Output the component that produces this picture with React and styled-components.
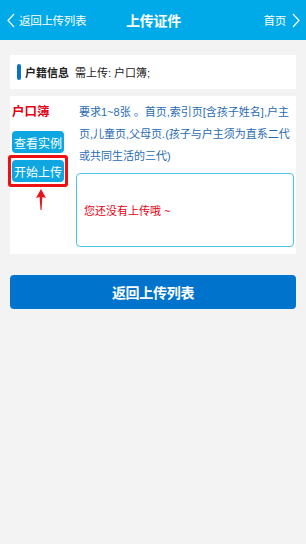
import React from "react";
import styled, { createGlobalStyle } from "styled-components";

const Global = createGlobalStyle`
  html, body { margin: 0; padding: 0; background: #f3f3f4; }
  body { font-family: "Liberation Sans", "Noto Sans CJK SC", sans-serif; width: 306px; height: 544px; }
  * { box-sizing: border-box; }
`;

const Header = styled.div`
  height: 40px;
  background: #00a9e7;
  color: #fff;
  display: grid;
  grid-template-columns: 1fr auto 1fr;
  align-items: center;
  padding: 0 6px 0 7px;
`;

const NavLink = styled.div`
  display: flex;
  align-items: center;
  justify-content: ${(p) => (p.$right ? "flex-end" : "flex-start")};
  gap: ${(p) => (p.$right ? "6px" : "4px")};
  font-size: 11.5px;
  letter-spacing: -0.3px;
`;

const Title = styled.div`
  font-size: 14px;
  font-weight: bold;
  letter-spacing: -0.3px;
`;

const Card = styled.div`
  margin: 0 10px;
  background: #fff;
`;

const InfoCard = styled(Card)`
  margin-top: 15px;
  height: 34px;
  display: flex;
  align-items: center;
  padding-left: 7px;
  font-size: 11px;
  color: #222;
`;

const Bar = styled.span`
  width: 4px;
  height: 16px;
  border-radius: 2px;
  background: #0a73c8;
  margin-right: 4px;
`;

const InfoLabel = styled.span`
  font-weight: bold;
  margin-right: 6px;
`;

const DocCard = styled(Card)`
  margin-top: 7px;
  display: flex;
  padding: 5px 2px 7px 0;
`;

const LeftCol = styled.div`
  width: 66px;
  padding-left: 2px;
  display: flex;
  flex-direction: column;
  align-items: flex-start;
`;

const DocName = styled.div`
  color: #e60012;
  font-weight: bold;
  font-size: 12.5px;
  line-height: 22px;
`;

const Btn = styled.div`
  width: 52px;
  height: 22px;
  border-radius: 4px;
  background: #0ea7e1;
  color: #fff;
  font-size: 12px;
  display: flex;
  align-items: center;
  justify-content: center;
`;

const FirstBtn = styled(Btn)`
  margin-top: 8px;
`;

const Highlight = styled.div`
  margin: 2px 0 0 -4px;
  padding: 2px 1px;
  border: 3px solid #ee1111;
  border-radius: 3px;
`;

const Arrow = styled.svg`
  display: block;
  margin: 2px 0 0 24px;
`;

const RightCol = styled.div`
  flex: 1;
  display: flex;
  flex-direction: column;
`;

const Req = styled.div`
  padding-left: 3px;
  color: #1f6bb3;
  font-size: 11px;
  line-height: 22px;
  white-space: nowrap;
`;

const UploadBox = styled.div`
  margin-top: 6px;
  height: 74px;
  border: 1px solid #4cc3e9;
  border-radius: 4px;
  display: flex;
  align-items: center;
  padding-left: 7px;
  color: #e60012;
  font-size: 11px;
`;

const BackBtn = styled.div`
  margin: 21px 10px 0;
  height: 34px;
  background: #0073cd;
  border-radius: 4px;
  color: #fff;
  font-weight: bold;
  font-size: 14px;
  letter-spacing: -0.3px;
  display: flex;
  align-items: center;
  justify-content: center;
`;

const Chevron = ({ dir }) => (
  <svg width="8" height="15" viewBox="0 0 8 15">
    <path
      d={dir === "left" ? "M7 1 L1 7.5 L7 14" : "M1 1 L7 7.5 L1 14"}
      fill="none"
      stroke="#fff"
      strokeWidth="1.2"
    />
  </svg>
);

export default function App() {
  return (
    <>
      <Global />
      <Header>
        <NavLink>
          <Chevron dir="left" />
          <span>返回上传列表</span>
        </NavLink>
        <Title>上传证件</Title>
        <NavLink $right>
          <span>首页</span>
          <Chevron dir="right" />
        </NavLink>
      </Header>
      <InfoCard>
        <Bar />
        <InfoLabel>户籍信息</InfoLabel>
        <span>需上传: 户口簿;</span>
      </InfoCard>
      <DocCard>
        <LeftCol>
          <DocName>户口簿</DocName>
          <FirstBtn>查看实例</FirstBtn>
          <Highlight>
            <Btn>开始上传</Btn>
          </Highlight>
          <Arrow width="10" height="21" viewBox="0 0 10 21">
            <path d="M5 0 L10 9 L6.4 8 L5.5 21 L4.5 21 L3.6 8 L0 9 Z" fill="#e8141b" />
          </Arrow>
        </LeftCol>
        <RightCol>
          <Req>
            要求1~8张 。首页,索引页[含孩子姓名],户主
            <br />
            页,儿童页,父母页.(孩子与户主须为直系二代
            <br />
            或共同生活的三代)
          </Req>
          <UploadBox>您还没有上传哦 ~</UploadBox>
        </RightCol>
      </DocCard>
      <BackBtn>返回上传列表</BackBtn>
    </>
  );
}
